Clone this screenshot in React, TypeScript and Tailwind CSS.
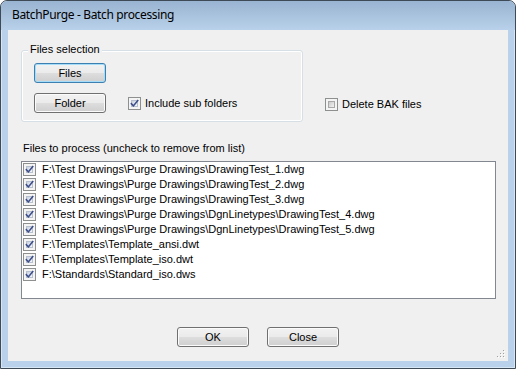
import React from "react";

const ui = { fontFamily: '"Liberation Sans", Arial, sans-serif' };

function Check({ checked }: { checked: boolean }) {
  return (
    <span className="relative block w-[13px] h-[13px] shrink-0 border border-[#8e8f8f] bg-[#f4f4f4]">
      <span
        className={
          "absolute inset-[2px] border " +
          (checked
            ? "border-[#b7c0ce] bg-linear-to-br from-[#cbd3df] to-[#f4f6f9]"
            : "border-[#a8a8a8] bg-linear-to-br from-[#c9c9c9] to-[#f3f3f3]")
        }
      />
      {checked && (
        <svg className="absolute inset-0" width="11" height="11" viewBox="0 0 11 11">
          <path d="M2.4 5.7 L4.4 7.9 L8.7 2.7" fill="none" stroke="#3c4d8a" strokeWidth="1.6" strokeLinecap="square" strokeLinejoin="miter" />
        </svg>
      )}
    </span>
  );
}

function Btn({ label, focused }: { label: string; focused?: boolean }) {
  return (
    <div
      className={
        "w-[72px] h-[20px] shrink-0 rounded-[3px] border flex items-center justify-center text-[11px] text-black bg-[linear-gradient(to_bottom,#f2f2f2_0%,#ebebeb_48%,#dddddd_52%,#cfcfcf_100%)] " +
        (focused
          ? "border-[#3c7fb1] shadow-[inset_0_0_0_1px_#a5dcf7]"
          : "border-[#707070] shadow-[inset_0_0_0_1px_#fbfbfb]")
      }
      style={ui}
    >
      {label}
    </div>
  );
}

const files = [
  "F:\\Test Drawings\\Purge Drawings\\DrawingTest_1.dwg",
  "F:\\Test Drawings\\Purge Drawings\\DrawingTest_2.dwg",
  "F:\\Test Drawings\\Purge Drawings\\DrawingTest_3.dwg",
  "F:\\Test Drawings\\Purge Drawings\\DgnLinetypes\\DrawingTest_4.dwg",
  "F:\\Test Drawings\\Purge Drawings\\DgnLinetypes\\DrawingTest_5.dwg",
  "F:\\Templates\\Template_ansi.dwt",
  "F:\\Templates\\Template_iso.dwt",
  "F:\\Standards\\Standard_iso.dws",
];

export default function App() {
  return (
    <div className="w-[516px] h-[369px] bg-white">
      <div className="w-[516px] h-[369px] flex flex-col rounded-t-[7px] border border-[#3e4a55] bg-[#b9d1ea] shadow-[inset_0_0_0_1px_#d6e6f5] overflow-hidden">
        <div className="h-[29px] shrink-0 flex items-center pl-[11px] bg-linear-to-b from-[#99b4d1] to-[#b9d1ea] rounded-t-[6px]">
          <span className="text-[12px] tracking-[-0.35px] text-black leading-none mt-[-1px]" style={{ fontFamily: '"Noto Sans", "Open Sans", sans-serif' }}>
            BatchPurge - Batch processing
          </span>
        </div>
        <div className="flex-1 px-[7px] pb-[7px] flex">
          <div className="relative flex-1 bg-[#f0f0f0] flex flex-col pl-[13px] pt-[20px]" style={ui}>
            <div className="flex items-start">
              <div className="relative w-[282px] h-[72px] rounded-[3px] border border-[#d5dfe5] shadow-[inset_0_0_0_1px_#ffffff] pl-[12px] pt-[12px] flex flex-col gap-[10px]">
                <span className="absolute left-[6px] top-[-8px] px-[2px] bg-[#f0f0f0] text-[11px] leading-[13px] text-black">
                  Files selection
                </span>
                <Btn label="Files" focused />
                <div className="flex items-center">
                  <Btn label="Folder" />
                  <div className="ml-[22px] flex items-center gap-[4px] mt-[1px]">
                    <Check checked />
                    <span className="text-[11px] leading-[13px] text-black">Include sub folders</span>
                  </div>
                </div>
              </div>
              <div className="ml-[22px] mt-[48px] flex items-center gap-[4px]">
                <Check checked={false} />
                <span className="text-[11px] leading-[13px] text-black">Delete BAK files</span>
              </div>
            </div>
            <div className="mt-[20px] pl-[2px] text-[11px] leading-[13px] text-black">
              Files to process (uncheck to remove from list)
            </div>
            <div className="mt-[6px] w-[475px] h-[138px] border border-[#828790] bg-white flex flex-col pl-[1px]">
              {files.map((f) => (
                <div key={f} className="h-[15px] flex items-center gap-[6px]">
                  <Check checked />
                  <span className="text-[11px] leading-[13px] text-black whitespace-nowrap">{f}</span>
                </div>
              ))}
            </div>
            <div className="mt-[28px] flex justify-center gap-[18px] pr-[13px]">
              <Btn label="OK" />
              <Btn label="Close" />
            </div>
            <svg className="absolute right-[2px] bottom-[2px]" width="10" height="10" viewBox="0 0 10 10">
              {[
                [7, 1],
                [7, 4],
                [4, 4],
                [7, 7],
                [4, 7],
                [1, 7],
              ].map(([x, y]) => (
                <g key={`${x}-${y}`}>
                  <rect x={x + 1} y={y + 1} width="1" height="1" fill="#ffffff" />
                  <rect x={x} y={y} width="1" height="1" fill="#a0a0a0" />
                </g>
              ))}
            </svg>
          </div>
        </div>
      </div>
    </div>
  );
}
